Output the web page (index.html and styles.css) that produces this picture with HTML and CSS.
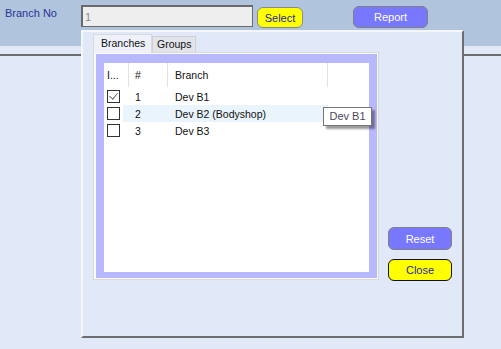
FILE: index.html
```html
<!DOCTYPE html>
<html lang="en">
<head>
  <meta charset="UTF-8" />
  <title>Branch Select</title>
  <link rel="stylesheet" href="styles.css">
</head>
<body>
  <div class="topbar">
    <label class="field-label" for="branchNo">Branch No</label>
    <input class="branch-box" id="branchNo" type="text" value="1" readonly />
    <button class="btn btn-yellow btn-select">Select</button>
    <button class="btn btn-blue btn-report">Report</button>
  </div>
  <div class="strip"></div>
  <div class="rule"></div>

  <!-- branch picker dropdown -->
  <div class="popup">
    <div class="tabs">
      <div class="tab-strip">
        <div class="tab tab-active">Branches</div>
        <div class="tab">Groups</div>
      </div>
      <div class="tab-page">
        <div class="grid-frame">
          <div class="grid">
            <div class="grid-row grid-head">
              <div class="cell c-inc">I...</div>
              <div class="cell c-num">#</div>
              <div class="cell c-name">Branch</div>
            </div>
            <div class="grid-row">
              <div class="cell c-inc"><span class="check checked"></span></div>
              <div class="cell c-num">1</div>
              <div class="cell c-name">Dev B1</div>
            </div>
            <div class="grid-row hover">
              <div class="cell c-inc"><span class="check"></span></div>
              <div class="cell c-num">2</div>
              <div class="cell c-name">Dev B2 (Bodyshop)</div>
            </div>
            <div class="grid-row">
              <div class="cell c-inc"><span class="check"></span></div>
              <div class="cell c-num">3</div>
              <div class="cell c-name">Dev B3</div>
            </div>
          </div>
        </div>
      </div>
    </div>
    <div class="side-buttons">
      <button class="btn btn-blue btn-side">Reset</button>
      <button class="btn btn-yellow btn-close btn-side">Close</button>
    </div>
  </div>

  <div class="tooltip">Dev B1</div>
</body>
</html>
```

FILE: styles.css
```css
body {
  margin: 0;
  background: #e1e8f8;
  font-family: "Liberation Sans", Arial, sans-serif;
  font-size: 11px;
  width: 501px;
  height: 349px;
  overflow: hidden;
}

.topbar {
  height: 46px;
  background: #b0c4de;
  display: flex;
  align-items: flex-start;
}

.field-label {
  width: 76px;
  padding: 7px 0 0 5px;
  color: #283593;
}

.branch-box {
  margin-top: 5px;
  width: 172px;
  height: 22px;
  box-sizing: border-box;
  border: 1px solid #6a6a6a;
  border-top-width: 2px;
  border-left-width: 2px;
  background: #eeeeee;
  color: #8a8a8a;
  font: inherit;
  padding: 0 2px;
}

.btn {
  font: inherit;
  box-sizing: border-box;
  border-radius: 6px;
  padding: 0;
  cursor: pointer;
}

.btn-yellow {
  background: #ffff00;
  color: #1e2aa0;
  border: 1px solid #8a8a8a;
}

.btn-blue {
  background: #7878ff;
  color: #fff;
  border: 1px solid #808080;
}

.btn-select {
  margin: 7px 0 0 4px;
  width: 46px;
  height: 21px;
}

.btn-report {
  margin: 6px 0 0 50px;
  width: 75px;
  height: 22px;
}

.strip {
  height: 8px;
}

.rule {
  border-top: 2px solid #6e6e6e;
}

.popup {
  position: absolute;
  left: 81px;
  top: 30px;
  width: 383px;
  height: 308px;
  box-sizing: border-box;
  background: #e1e8f8;
  border-top: 2px solid #f4f6fc;
  border-left: 2px solid #f4f6fc;
  border-right: 2px solid #6e6e6e;
  border-bottom: 2px solid #6e6e6e;
  display: flex;
  padding: 2px 0 0 10px;
}

.tabs {
  width: 286px;
}

.tab-strip {
  display: flex;
  align-items: flex-end;
  height: 18px;
}

.tab {
  box-sizing: border-box;
  height: 16px;
  padding: 0 4px;
  font-size: 10.5px;
  line-height: 15px;
  background: #e3e3ea;
  border: 1px solid #cfcfd6;
  border-bottom: none;
  color: #111;
}

.tab-active {
  height: 19px;
  width: 59px;
  padding-left: 7px;
  background: #eef1fa;
  border-color: #d9d9de;
  line-height: 17px;
  position: relative;
  top: 1px;
}

.tab-page {
  box-sizing: border-box;
  height: 228px;
  border: 1px solid #d9d9d9;
  background: #fafafa;
  padding: 1px 1px 1px 2px;
}

.grid-frame {
  height: 100%;
  box-sizing: border-box;
  background: #b8b8ff;
  padding: 9px 8px 6px 8px;
}

.grid {
  height: 100%;
  background: #fff;
  font-size: 10.5px;
  color: #111;
}

.grid-row {
  display: flex;
  height: 17px;
  align-items: center;
}

.grid-head {
  height: 24px;
  margin-bottom: 1px;
}

.grid-head .cell {
  height: 100%;
  display: flex;
  align-items: center;
  border-right: 1px solid #e2e2e2;
  box-sizing: border-box;
}

.cell {
  white-space: nowrap;
}

.c-inc {
  width: 25px;
  padding-left: 3px;
  box-sizing: border-box;
}

.c-num {
  width: 39px;
  padding-left: 6px;
  box-sizing: border-box;
}

.c-name {
  width: 160px;
  padding-left: 7px;
  box-sizing: border-box;
}

.hover .c-num,
.hover .c-name {
  background: #eaf4fd;
  height: 100%;
  display: flex;
  align-items: center;
}

.hover .c-num {
  margin-left: -6px;
  padding-left: 12px;
  width: 45px;
}

.check {
  display: block;
  width: 13px;
  height: 13px;
  box-sizing: border-box;
  border: 1px solid #333;
  background: #fff;
  position: relative;
}

.checked::after {
  content: "";
  position: absolute;
  left: 3px;
  top: 0px;
  width: 4px;
  height: 7px;
  border: solid #6a6a6a;
  border-width: 0 1px 1px 0;
  transform: rotate(40deg);
}

.side-buttons {
  margin: 193px 0 0 9px;
  display: flex;
  flex-direction: column;
  gap: 9px;
}

.btn-side {
  width: 64px;
  height: 23px;
}

.btn-close {
  height: 22px;
  border-color: #111;
}

.tooltip {
  position: absolute;
  left: 323px;
  top: 107px;
  width: 49px;
  height: 19px;
  box-sizing: border-box;
  border: 1px solid #767676;
  background: #fff;
  color: #4a4a5a;
  font-size: 11px;
  line-height: 17px;
  text-align: center;
  box-shadow: 3px 3px 2px rgba(0, 0, 0, 0.4);
}
```
